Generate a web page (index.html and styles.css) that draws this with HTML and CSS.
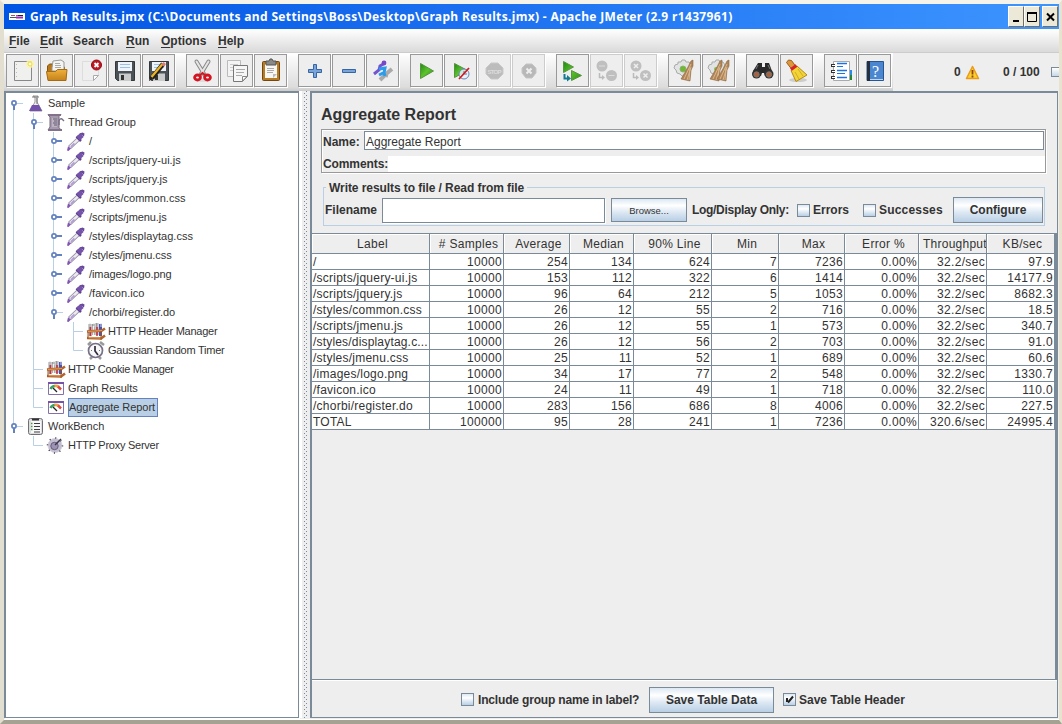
FILE: index.html
```html
<!DOCTYPE html>
<html lang="en">
<head>
<meta charset="utf-8">
<title>Graph Results.jmx - Apache JMeter</title>
<link rel="stylesheet" href="styles.css">
</head>
<body>
<svg class="defs" width="0" height="0" aria-hidden="true">
  <defs>
    <linearGradient id="green" x1="0" y1="0" x2="1" y2="1"><stop offset="0" stop-color="#1c8a12"/><stop offset=".5" stop-color="#5ec42c"/><stop offset="1" stop-color="#2a8a1c"/></linearGradient>
    <linearGradient id="gold" x1="0" y1="0" x2="0" y2="1"><stop offset="0" stop-color="#f0b03c"/><stop offset="1" stop-color="#c4821a"/></linearGradient>
    <symbol id="page" viewBox="0 0 31 31"><path d="M7.500 6.500h17v19h-17z" fill="#f0f0ee" stroke="#888"/><path d="M9.500 9v14" stroke="#bbb" stroke-dasharray="1 3"/></symbol>
    <symbol id="disk" viewBox="0 0 31 31"><path d="M6.500 6.500h19v19h-17l-2-2z" fill="#4a5157" stroke="#33383c"/><path d="M9 7h14v9H9z" fill="#eef4fa"/><path d="M11 9.500h10M11 12.500h10" stroke="#9dbfe4"/><path d="M10 18.500h12V26H10z" fill="#c9cccb"/><path d="M12 20h3v5h-3z" fill="#333"/></symbol>
    <symbol id="drop" viewBox="0 0 20 19"><path d="M3.500 15.500l8.500-8" stroke="#9690a6" stroke-width="4.400"/><path d="M4 15l8-7.500" stroke="#eceaf0" stroke-width="2.400"/><path d="M1 18.500l1-4 3 2-2.500 2.500z" fill="#8254b4"/><path d="M5 15l3.500-3.500" stroke="#b49fd4" stroke-width="2"/><path d="M10.500 4.500l4.500 4.500" stroke="#5d418c" stroke-width="2.500"/><path d="M12 6.500L16 3" stroke="#7553aa" stroke-width="5"/><path d="M13.500 1.500l3-1 2 1-.5 3z" fill="#68489a"/></symbol>
    <symbol id="tubes" viewBox="0 0 20 19"><path d="M4 2v12M7.500 2v11M11 1v12" stroke="#999" stroke-width="3"/><path d="M14.500 2v12" stroke="#4751b4" stroke-width="3"/><path d="M4 1v4M8 1v4M12 1v4M15 1v4" stroke="#ddd"/><path d="M4.500 5v9M11 5v9" stroke="#c33045" stroke-width="1.500"/><path d="M7.500 4v9" stroke="#f2f2f2" stroke-width="1.500"/><path d="M1 9.500l15-1 3-2M1 16l14 .5 4-3" stroke="#b5652c" stroke-width="2.500" fill="none"/><path d="M2 9.500l14-1M2 15.500l13 .5" stroke="#e79a51"/><path d="M2 10v7M15 9v9" stroke="#a0561f"/></symbol>
    <symbol id="gauge" viewBox="0 0 20 19"><path d="M2 3.500h16v12H2z" fill="#fff"/><path d="M2.500 4v11.500h15V4" fill="none" stroke="#8570a9"/><path d="M2 4h16" stroke="#7652a8" stroke-width="2"/><path d="M4.500 10Q6 7 9 7" fill="none" stroke="#3a9f5f" stroke-width="2.500"/><path d="M8.500 7Q11 6.500 13 8" fill="none" stroke="#eda044" stroke-width="2.500"/><path d="M12 7.500l3 3" stroke="#e0473f" stroke-width="2.500"/><path d="M7 9l4 4" stroke="#222" stroke-width="1.300"/></symbol>
    <symbol id="open" viewBox="0 0 20 19"><path d="M11 9.500h6" stroke="#b8cfe5"/><path d="M8 11v5" stroke="#6382bf" stroke-width="2"/><circle cx="8" cy="9" r="2.100" fill="#fff" stroke="#6382bf" stroke-width="1.700"/></symbol>
    <symbol id="shut" viewBox="0 0 20 19"><path d="M10 9h6" stroke="#6382bf" stroke-width="2"/><circle cx="8" cy="9" r="2.100" fill="#fff" stroke="#6382bf" stroke-width="1.700"/></symbol>
    <symbol id="gear" viewBox="0 0 31 31"><path d="M9 7h3l1-2h3l1 2h3l2 3-1 2 1 3-2 3-2 1-2 2h-3l-2-2-3-1-1-3-2-2 1-3 3-1z" fill="#e2e4e3" stroke="#a8abab"/></symbol>
    <symbol id="brush" viewBox="0 0 31 31"><path d="M21 6l2-1 0 6-2 4-1 11-9-2 3-5 4-7z" fill="#b18558" stroke="#8c6540" stroke-width=".6"/><path d="M21 9l-7 15M21 12l-4 13M20 13l-1 12" stroke="#d9b78d"/></symbol>
  </defs>
</svg>

<div class="window">
  <header class="titlebar">
    <svg class="app-icon" width="16" height="16"><path fill="#fff" d="M0 4h16v7H0z"/><path d="M2 6.500h4M7 6.500h2" stroke="#9a5878"/><path d="M9 6.500h5" stroke="#222"/><path d="M1 8.500h6" stroke="#555"/><path d="M7 8.500h7" stroke="#9c2fb4" stroke-width="2"/></svg>
    <h1 class="title">Graph Results.jmx (C:\Documents and Settings\Boss\Desktop\Graph Results.jmx) - Apache JMeter (2.9 r1437961)</h1>
    <div class="winbuttons">
      <svg class="wb" width="15" height="21"><path d="M4 14h6" stroke="#000" stroke-width="2"/></svg>
      <svg class="wb" width="15" height="21"><path d="M2.500 6v8.500h9V6" fill="none" stroke="#000"/><path d="M2 6h10" stroke="#000" stroke-width="2"/></svg>
      <svg class="wb wb-close" width="15" height="21"><path d="M4 6.500l7 7M11 6.500l-7 7" stroke="#000" stroke-width="2"/></svg>
    </div>
  </header>

  <nav class="menubar">
    <span class="m-file"><u>F</u>ile</span><span class="m-edit"><u>E</u>dit</span><span class="m-search">Search</span><span class="m-run"><u>R</u>un</span><span class="m-options"><u>O</u>ptions</span><span class="m-help"><u>H</u>elp</span>
  </nav>

  <div class="toolbar">
    <div class="group">
      <div class="tb"><svg width="31" height="31"><use href="#page"/><circle cx="23" cy="9" r="4" fill="#fff7a0" opacity=".8"/><circle cx="23" cy="9" r="2" fill="#fff" stroke="#efd93b"/></svg></div>
      <div class="tb"><svg width="31" height="31"><path d="M6.500 11l2-2h4l2 3h9v8h-17z" fill="#b87818" stroke="#86560e"/><path d="M11 13l1-7 8-1 3 2v9H11z" fill="#f4f4f2" stroke="#999"/><path d="M14 8.500h5M14 10.500h6M14 12.500h6" stroke="#aaa"/><path d="M5.500 16.500h9l2-2h9.500l-1 11h-18z" fill="url(#gold)" stroke="#a66a10"/></svg></div>
      <div class="tb"><svg width="31" height="31"><path d="M7.500 6.500h16v14l-5 5h-11z" fill="#efefef" stroke="#ddd"/><path d="M18.500 25.500v-5h5z" fill="#fff" stroke="#aaa"/><circle cx="21.500" cy="10" r="5" fill="#c11722" stroke="#8d0c15"/><path d="M19.500 8l4 4M23.500 8l-4 4" stroke="#fff" stroke-width="1.800"/></svg></div>
      <div class="tb"><svg width="31" height="31"><use href="#disk"/></svg></div>
      <div class="tb"><svg width="31" height="31"><use href="#disk"/><path d="M9 23l11-14" stroke="#222" stroke-width="4.500"/><path d="M8.500 22l11-13" stroke="#f1b421" stroke-width="2.200"/><path d="M18.500 9.500l2-2.500 2.500 2-2 2.500z" fill="#dc7b70"/><path d="M6 26l1-5 3 3z" fill="#222"/></svg></div>
    </div>
    <div class="group">
      <div class="tb"><svg width="31" height="31"><ellipse cx="16" cy="25" rx="8" ry="2" fill="#ddd"/><path d="M9.500 6.500l8.500 14M21.500 6.500l-8.500 14" stroke="#888" stroke-width="4" stroke-linecap="round"/><path d="M9.500 6.500l8.500 14M21.500 6.500l-8.500 14" stroke="#e5e5e3" stroke-width="2" stroke-linecap="round"/><ellipse cx="10.500" cy="22.500" rx="2.900" ry="2.500" fill="#eee" stroke="#d31522" stroke-width="2.800"/><ellipse cx="20.500" cy="22.500" rx="2.900" ry="2.500" fill="#eee" stroke="#d31522" stroke-width="2.800"/><path d="M13 20l2.500-2 2.500 2" stroke="#d31522" stroke-width="2" fill="none"/></svg></div>
      <div class="tb"><svg width="31" height="31"><path d="M6.500 5.500h13v16h-13z" fill="#f4f4f4" stroke="#bbb"/><path d="M9 9.500h8M9 12.500h8M9 15.500h4" stroke="#ccc"/><path d="M12.500 10.500h14v11l-5 5h-9z" fill="#f6f6f6" stroke="#777"/><path d="M15 14.500h9M15 17.500h8M15 20.500h6" stroke="#aaa"/><path d="M21.500 26v-4.500H26z" fill="#fff" stroke="#888"/></svg></div>
      <div class="tb"><svg width="31" height="31"><rect x="7.500" y="6.500" width="17" height="19" rx="1" fill="#b77b22" stroke="#714814"/><path d="M10 9h12v14H10z" fill="#f7f7f4"/><path d="M12 13.500h7M12 15.500h7M12 17.500h6" stroke="#aaa"/><path d="M18 23v-4h4z" fill="#bbb"/><path d="M11 6h3l1-2h2l1 2h3v4H11z" fill="#888a85" stroke="#555"/></svg></div>
    </div>
    <div class="group">
      <div class="tb"><svg width="31" height="31"><path d="M14.500 9.500h3v5h5v3h-5v5h-3v-5h-5v-3h5z" fill="#7aa5dc" stroke="#3465a4"/></svg></div>
      <div class="tb"><svg width="31" height="31"><path d="M9.500 14.500h13v3h-13z" fill="#7aa5dc" stroke="#3465a4"/></svg></div>
      <div class="tb"><svg width="31" height="31"><path d="M13 25l6-6 6-5" stroke="#aaa" stroke-width="4" fill="none"/><path d="M16 20l5 1" stroke="#aaa" stroke-width="3"/><path d="M7 19l5-4 1-4 5-3" fill="none" stroke="#7553cf" stroke-width="3"/><circle cx="17" cy="8" r="2.400" fill="#7847c8"/><path d="M12 14l6-1-1 5 1 3M12 20l4-2" fill="none" stroke="#299cec" stroke-width="3"/></svg></div>
    </div>
    <div class="group">
      <div class="tb"><svg width="31" height="31"><path d="M9.500 8.500v15l13-7.500z" fill="url(#green)" stroke="#55933d"/></svg></div>
      <div class="tb"><svg width="31" height="31"><path d="M9.500 8.500v14l13-7z" fill="url(#green)" stroke="#55933d"/><circle cx="19" cy="19" r="5" fill="#e8f0fb" fill-opacity=".85" stroke="#6587b4"/><path d="M19 16v3h3" stroke="#5576ae" fill="none"/><path d="M14 24l10-11" stroke="#d11a1a" stroke-width="1.700"/></svg></div>
      <div class="tb off"><svg width="31" height="31"><path d="M12 8h7l5 5v6l-5 5h-7l-5-5v-6z" fill="#bcbcbc" stroke="#c9c9c9"/><text x="8.500" y="18.500" class="stop-word" textLength="14">STOP</text></svg></div>
      <div class="tb off"><svg width="31" height="31"><path d="M13 9h6l4 4v5l-4 5h-6l-4-5v-5z" fill="#b8b8b8" stroke="#c5c5c5"/><path d="M13.500 13.500l5 5M18.500 13.500l-5 5" stroke="#eee" stroke-width="2"/></svg></div>
    </div>
    <div class="group">
      <div class="tb"><svg width="31" height="31"><path d="M6.500 6.500v11l10-5.500zM14.500 15.500v10l10-5z" fill="url(#green)" stroke="#59943e"/><path d="M7.500 19v4.500h3" fill="none" stroke="#147a91" stroke-width="2"/><path d="M10 20l4 3.500-4 3z" fill="#147a91"/></svg></div>
      <div class="tb off"><svg width="31" height="31"><circle cx="11" cy="11" r="5.500" fill="#bfbfbf"/><circle cx="20.500" cy="20.500" r="5.500" fill="#bfbfbf"/><path d="M8 11h6M17.500 20.500h6" stroke="#ddd"/><path d="M8.500 18v4.500h3" fill="none" stroke="#bbb" stroke-width="1.500"/><path d="M11 20l3 2.500-3 2.500z" fill="#bbb"/></svg></div>
      <div class="tb off"><svg width="31" height="31"><circle cx="11" cy="11" r="5.500" fill="#bfbfbf"/><circle cx="20.500" cy="20.500" r="5.500" fill="#bfbfbf"/><path d="M9 9l4 4M13 9l-4 4M18.500 18.500l4 4M22.500 18.500l-4 4" stroke="#eee" stroke-width="1.500"/><path d="M8.500 18v4.500h3" fill="none" stroke="#bbb" stroke-width="1.500"/><path d="M11 20l3 2.500-3 2.500z" fill="#bbb"/></svg></div>
    </div>
    <div class="group wide">
      <div class="tb"><svg width="31" height="31"><use href="#gear"/><circle cx="14" cy="14" r="3" fill="#6cbb2a" stroke="#91ad7a"/><use href="#brush" x="1"/></svg></div>
      <div class="tb"><svg width="31" height="31"><use href="#gear"/><circle cx="13" cy="14" r="2" fill="#8abd52"/><use href="#brush" x="-4"/><use href="#brush" x="3"/></svg></div>
    </div>
    <div class="group wide">
      <div class="tb"><svg width="31" height="31"><path d="M11 8h4v4h3V8h4l3 8v5h-7l-1-3h-2l-1 3H6v-5z" fill="#292929"/><circle cx="9.500" cy="19" r="4.500" fill="#30302f"/><circle cx="22" cy="19" r="4.500" fill="#30302f"/><circle cx="9.500" cy="19.500" r="2.700" fill="#ab623b" stroke="#777"/><circle cx="22" cy="19.500" r="2.700" fill="#ab623b" stroke="#777"/><path d="M11 10l-2 4M21 10l2 4" stroke="#777"/></svg></div>
      <div class="tb"><svg width="31" height="31"><ellipse cx="17" cy="25" rx="9" ry="2" fill="#ccc"/><path d="M5.500 7.500l2-2.500 3 .5 4 5.500-4 3z" fill="#dc963c" stroke="#9c5f16"/><path d="M10 15.500l6-4.500 10 9-11 6.500z" fill="#f2d437" stroke="#b58a13"/><path d="M10 14.500l5.500-4" stroke="#d6222b" stroke-width="3"/><path d="M14 17l4 7M17 14l5 7" stroke="#cfae27"/></svg></div>
    </div>
    <div class="group wide">
      <div class="tb"><svg width="31" height="31"><path d="M24 15h3v5h-3z" fill="#2788ed"/><path d="M24 20h3v5h-3z" fill="#21862c"/><path d="M8.500 6.500h16v19h-16z" fill="#fff" stroke="#aaa"/><path d="M12 8.500h10M12 15.500h10M12 22.500h10" stroke="#1c73e3" stroke-width="1.500"/><path d="M12 11.500h6M12 18.500h8" stroke="#1c73e3"/><path d="M6 10.500h4M6 16.500h4M6 22.500h4" stroke="#333" stroke-width="3"/><path d="M7 10.500h3M7 16.500h3M7 22.500h3" stroke="#fff"/></svg></div>
      <div class="tb"><svg width="31" height="31"><path d="M8 6.500h16.500v19H8z" fill="#4b87d0" stroke="#27578e"/><path d="M8 6h3v20H8z" fill="#252f3e"/><path d="M11 24.500h13" stroke="#bcd7f6"/><text x="13" y="21.500" class="help-mark">?</text></svg></div>
    </div>
    <div class="status">
      <span class="errs">0</span>
      <svg width="15" height="15"><path d="M7.500 1.500l6 12h-12z" fill="#fcd02e" stroke="#e99c18" stroke-width="1.500" stroke-linejoin="round"/><path d="M7.500 5v4.500M7.500 10.500v2" stroke="#92410a" stroke-width="1.800"/></svg>
      <span class="threads">0 / 100</span>
      <i class="lamp"></i>
    </div>
  </div>

  <div class="body">
    <div class="tree">
      <div class="row"><svg class="c"><path class="ln" d="M7.500 10v9"/><use href="#open"/></svg><svg class="c"><path d="M7 2l2 1v5l-5 9h12l-5-9V3l1-1z" fill="#eee" stroke="#999"/><path d="M6 11h7l3 6H3z" fill="#7350ab"/><path d="M6 3h7M11 4v6" stroke="#777"/></svg><span>Sample</span></div>
      <div class="row"><svg class="c"><path class="ln" d="M7.500 0v19"/></svg><svg class="c"><path class="ln" d="M7.500 0v19"/><use href="#open"/></svg><svg class="c"><path d="M2 1.500h13l-2 2v11l2 2.500H2l2-3V4z" fill="#a69bae" stroke="#76697f"/><path d="M2 2h13M2 17h14" stroke="#81718b" stroke-width="2"/><path d="M6 5h5v9H6z" fill="#bdb4c3"/><path d="M7 6h4M8 8h3M7 10h4M8 12h3" stroke="#655a70"/><path d="M13 12V8q1-3 3-2l2 2" fill="none" stroke="#796d82" stroke-width="1.400"/></svg><span>Thread Group</span></div>
      <div class="row"><svg class="c"><path class="ln" d="M7.500 0v19"/></svg><svg class="c"><path class="ln" d="M7.500 0v19"/></svg><svg class="c"><path class="ln" d="M7.500 0v19"/><use href="#shut"/></svg><svg class="c"><use href="#drop"/></svg><span class="s">/</span></div>
      <div class="row"><svg class="c"><path class="ln" d="M7.500 0v19"/></svg><svg class="c"><path class="ln" d="M7.500 0v19"/></svg><svg class="c"><path class="ln" d="M7.500 0v19"/><use href="#shut"/></svg><svg class="c"><use href="#drop"/></svg><span class="s">/scripts/jquery-ui.js</span></div>
      <div class="row"><svg class="c"><path class="ln" d="M7.500 0v19"/></svg><svg class="c"><path class="ln" d="M7.500 0v19"/></svg><svg class="c"><path class="ln" d="M7.500 0v19"/><use href="#shut"/></svg><svg class="c"><use href="#drop"/></svg><span class="s">/scripts/jquery.js</span></div>
      <div class="row"><svg class="c"><path class="ln" d="M7.500 0v19"/></svg><svg class="c"><path class="ln" d="M7.500 0v19"/></svg><svg class="c"><path class="ln" d="M7.500 0v19"/><use href="#shut"/></svg><svg class="c"><use href="#drop"/></svg><span class="s">/styles/common.css</span></div>
      <div class="row"><svg class="c"><path class="ln" d="M7.500 0v19"/></svg><svg class="c"><path class="ln" d="M7.500 0v19"/></svg><svg class="c"><path class="ln" d="M7.500 0v19"/><use href="#shut"/></svg><svg class="c"><use href="#drop"/></svg><span class="s narrow">/scripts/jmenu.js</span></div>
      <div class="row"><svg class="c"><path class="ln" d="M7.500 0v19"/></svg><svg class="c"><path class="ln" d="M7.500 0v19"/></svg><svg class="c"><path class="ln" d="M7.500 0v19"/><use href="#shut"/></svg><svg class="c"><use href="#drop"/></svg><span class="s">/styles/displaytag.css</span></div>
      <div class="row"><svg class="c"><path class="ln" d="M7.500 0v19"/></svg><svg class="c"><path class="ln" d="M7.500 0v19"/></svg><svg class="c"><path class="ln" d="M7.500 0v19"/><use href="#shut"/></svg><svg class="c"><use href="#drop"/></svg><span class="s narrow">/styles/jmenu.css</span></div>
      <div class="row"><svg class="c"><path class="ln" d="M7.500 0v19"/></svg><svg class="c"><path class="ln" d="M7.500 0v19"/></svg><svg class="c"><path class="ln" d="M7.500 0v19"/><use href="#shut"/></svg><svg class="c"><use href="#drop"/></svg><span class="s narrow">/images/logo.png</span></div>
      <div class="row"><svg class="c"><path class="ln" d="M7.500 0v19"/></svg><svg class="c"><path class="ln" d="M7.500 0v19"/></svg><svg class="c"><path class="ln" d="M7.500 0v19"/><use href="#shut"/></svg><svg class="c"><use href="#drop"/></svg><span class="s">/favicon.ico</span></div>
      <div class="row"><svg class="c"><path class="ln" d="M7.500 0v19"/></svg><svg class="c"><path class="ln" d="M7.500 0v19"/></svg><svg class="c"><path class="ln" d="M7.500 0v9"/><use href="#open"/></svg><svg class="c"><use href="#drop"/></svg><span class="s narrow">/chorbi/register.do</span></div>
      <div class="row"><svg class="c"><path class="ln" d="M7.500 0v19"/></svg><svg class="c"><path class="ln" d="M7.500 0v19"/></svg><svg class="c"></svg><svg class="c"><path class="ln" d="M7.500 0v19M7 9.500h10"/></svg><svg class="c"><use href="#tubes"/></svg><span class="tight">HTTP Header Manager</span></div>
      <div class="row"><svg class="c"><path class="ln" d="M7.500 0v19"/></svg><svg class="c"><path class="ln" d="M7.500 0v19"/></svg><svg class="c"></svg><svg class="c"><path class="ln" d="M7.500 0v9.500h9.500"/></svg><svg class="c"><path d="M2 4l3-3M14 1l4 3M4 18l2-2M15 18l-2-2" stroke="#999" stroke-width="2.500"/><circle cx="9.500" cy="9.500" r="7" fill="#f8f8f8" stroke="#777187" stroke-width="1.700"/><path d="M9 5v5l3 4" fill="none" stroke="#302c3c" stroke-width="1.700"/><path d="M5 9.500h1M13 9.500h1" stroke="#777"/></svg><span class="tight">Gaussian Random Timer</span></div>
      <div class="row"><svg class="c"><path class="ln" d="M7.500 0v19"/></svg><svg class="c"><path class="ln" d="M7.500 0v19M7 9.500h10"/></svg><svg class="c"><use href="#tubes"/></svg><span class="tightest">HTTP Cookie Manager</span></div>
      <div class="row"><svg class="c"><path class="ln" d="M7.500 0v19"/></svg><svg class="c"><path class="ln" d="M7.500 0v19M7 9.500h10"/></svg><svg class="c"><use href="#gauge"/></svg><span>Graph Results</span></div>
      <div class="row"><svg class="c"><path class="ln" d="M7.500 0v19"/></svg><svg class="c"><path class="ln" d="M7.500 0v9.500h9.500"/></svg><svg class="c"><use href="#gauge"/></svg><span class="selected">Aggregate Report</span></div>
      <div class="row"><svg class="c"><path class="ln" d="M7.500 0v9"/><use href="#open"/></svg><svg class="c"><rect x="2.500" y="1.500" width="14" height="16" rx="2" fill="#ddd" stroke="#706d78"/><path d="M5 4h10v12H5z" fill="#f8f8f8"/><path d="M6 2.500h7" stroke="#333" stroke-width="2"/><path d="M8 6.500h6M8 9.500h6M8 12.500h6M8 15h6" stroke="#3d3d42"/><path d="M5 6.500h1.500M5 9.500h1.500M5 12.500h1.500" stroke="#4a9546" stroke-width="1.500"/></svg><span>WorkBench</span></div>
      <div class="row"><svg class="c"></svg><svg class="c"><path class="ln" d="M7.500 0v9.500h9.500"/></svg><svg class="c"><circle cx="9" cy="9.500" r="7" fill="#c3bdd0" stroke="#d7d2e0"/><circle cx="9" cy="9.500" r="7.500" fill="none" stroke="#332e3c" stroke-dasharray="1 4.900" stroke-width="1.500"/><circle cx="8.500" cy="10" r="3.700" fill="#9c92b4" stroke="#675c78"/><path d="M9 9l6-6" stroke="#3d354b" stroke-width="1.500"/></svg><span class="tight">HTTP Proxy Server</span></div>
    </div>
    <div class="splitter"></div>

    <main class="panel">
      <h2>Aggregate Report</h2>
      <div class="namebox">
        <div class="line name"><label>Name:</label><div class="field">Aggregate Report</div></div>
        <div class="line comments"><label>Comments:</label><div class="blank"></div></div>
      </div>
      <div class="filebox">
        <span class="legend">Write results to file / Read from file</span>
        <label class="fn">Filename</label><div class="fileinput"></div><div class="btn browse">Browse...</div>
        <span class="log">Log/Display Only:</span>
        <i class="cb"></i><span class="err">Errors</span>
        <i class="cb"></i><span class="suc">Successes</span>
        <div class="btn configure">Configure</div>
      </div>
      <div class="scroll">
        <table>
          <colgroup><col class="w118"><col class="w74"><col class="w66"><col class="w64"><col class="w78"><col class="w67"><col class="w66"><col class="w74"><col class="w68"><col class="w68"></colgroup>
          <thead><tr><th>Label</th><th># Samples</th><th>Average</th><th>Median</th><th>90% Line</th><th>Min</th><th>Max</th><th>Error %</th><th class="thr">Throughput</th><th>KB/sec</th></tr></thead>
          <tbody>
            <tr><td>/</td><td>10000</td><td>254</td><td>134</td><td>624</td><td>7</td><td>7236</td><td>0.00%</td><td>32.2/sec</td><td>97.9</td></tr>
            <tr><td>/scripts/jquery-ui.js</td><td>10000</td><td>153</td><td>112</td><td>322</td><td>6</td><td>1414</td><td>0.00%</td><td>32.2/sec</td><td>14177.9</td></tr>
            <tr><td>/scripts/jquery.js</td><td>10000</td><td>96</td><td>64</td><td>212</td><td>5</td><td>1053</td><td>0.00%</td><td>32.2/sec</td><td>8682.3</td></tr>
            <tr><td>/styles/common.css</td><td>10000</td><td>26</td><td>12</td><td>55</td><td>2</td><td>716</td><td>0.00%</td><td>32.2/sec</td><td>18.5</td></tr>
            <tr><td>/scripts/jmenu.js</td><td>10000</td><td>26</td><td>12</td><td>55</td><td>1</td><td>573</td><td>0.00%</td><td>32.2/sec</td><td>340.7</td></tr>
            <tr><td class="full">/styles/displaytag.c...</td><td>10000</td><td>26</td><td>12</td><td>56</td><td>2</td><td>703</td><td>0.00%</td><td>32.2/sec</td><td>91.0</td></tr>
            <tr><td>/styles/jmenu.css</td><td>10000</td><td>25</td><td>11</td><td>52</td><td>1</td><td>689</td><td>0.00%</td><td>32.2/sec</td><td>60.6</td></tr>
            <tr><td>/images/logo.png</td><td>10000</td><td>34</td><td>17</td><td>77</td><td>2</td><td>548</td><td>0.00%</td><td>32.2/sec</td><td>1330.7</td></tr>
            <tr><td>/favicon.ico</td><td>10000</td><td>24</td><td>11</td><td>49</td><td>1</td><td>718</td><td>0.00%</td><td>32.2/sec</td><td>110.0</td></tr>
            <tr><td>/chorbi/register.do</td><td>10000</td><td>283</td><td>156</td><td>686</td><td>8</td><td>4006</td><td>0.00%</td><td>32.2/sec</td><td>227.5</td></tr>
            <tr><td>TOTAL</td><td>100000</td><td>95</td><td>28</td><td>241</td><td>1</td><td>7236</td><td>0.00%</td><td>320.6/sec</td><td>24995.4</td></tr>
          </tbody>
        </table>
      </div>
      <footer class="actions">
        <i class="cb"></i><span class="inc">Include group name in label?</span>
        <div class="btn save">Save Table Data</div>
        <i class="cb"><svg width="11" height="11"><path d="M3 4v4M4 8.500L9 2.500" stroke="#222" stroke-width="2" fill="none"/></svg></i><span class="hdr">Save Table Header</span>
      </footer>
    </main>
  </div>
</div>
</body>
</html>
```
FILE: styles.css
```css
* { box-sizing: border-box; }
body { margin: 0; width: 1062px; height: 724px; overflow: hidden; background: #ece9d8; font: 12px "Liberation Sans", Arial, sans-serif; color: #333; }
svg { display: block; flex: none; }
.defs { position: absolute; }
.window { width: 1062px; height: 724px; display: flex; flex-direction: column; border: solid; border-width: 4px 3px 4px 4px; border-color: #f5f3ea #e7e3cf #a5a294 #e2dfd0; background: #eee; box-shadow: inset 0 -1px #fff; }
.titlebar { flex: none; height: 25px; display: flex; align-items: center; background: linear-gradient(90deg, #0054e3, #1c70f0 45%, #3d95ff); color: #fff; padding: 0 1px 0 5px; }
.app-icon { margin-right: 5px; }
.title { margin: 0; white-space: nowrap; font: bold 12px/25px "Noto Sans", sans-serif; letter-spacing: .345px; flex: 1; }
.winbuttons { display: flex; }
.wb { background: #ece9d8; border: solid 1px; border-color: #fff #716f64 #716f64 #fff; width: 16px; }
.wb-close { margin-left: 2px; }
.menubar { flex: none; height: 24px; display: flex; background: linear-gradient(#fff, #dadada); border-bottom: 1px solid #ccc; font-weight: bold; line-height: 24px; padding-left: 5px; }
.menubar u { text-underline-offset: 2px; }
.menubar span { white-space: nowrap; }
.m-file { width: 31px; }
.m-edit { width: 33px; }
.m-search { width: 53px; letter-spacing: .15px; }
.m-run { width: 35px; }
.m-options { width: 57px; }
.toolbar { flex: none; height: 38px; display: flex; padding: 1px 0 0 2px; background: linear-gradient(#fff, #dcdcdc 34px, #ccc); }
.group { display: flex; gap: 1px; margin-right: 11px; }
.tb { width: 33px; height: 33px; border: 1px solid #999; background: #eee; box-shadow: 1px 1px #fff; }
.off { border-color: #ccc; }
.stop-word { font: bold 6px "Liberation Sans", sans-serif; fill: #ddd; }
.help-mark { font: 16px "Liberation Serif", serif; fill: #fff; }
.status { flex: 1; display: flex; align-items: center; background: #eee; margin: -1px 0 0 -9px; font-weight: bold; overflow: hidden; }
.errs { margin-left: 61px; width: 11px; flex: none; }
.threads { margin-left: 23px; width: 48px; flex: none; white-space: nowrap; }
.lamp { width: 14px; height: 10px; flex: none; border: 1px solid #7a8a99; background: linear-gradient(#fff, #c5d8e8); }
.body { flex: 1; min-height: 0; display: flex; align-items: flex-start; }
.tree { width: 295px; height: 627px; background: #fff; border: solid #7a8a99; border-width: 2px 1px 1px 2px; padding-top: 1px; box-shadow: 1px 1px #fff; font-size: 11px; }
.row { height: 19px; display: flex; align-items: center; white-space: nowrap; letter-spacing: -.05px; }
.row span { margin-left: 2px; line-height: 17px; }
.row .s { margin-left: 3px; letter-spacing: .03px; }
.row .narrow { letter-spacing: -.07px; }
.row .tight { letter-spacing: -.25px; }
.row .tightest { letter-spacing: -.35px; }
.row .selected { background: #b8cfe5; border: 1px solid #6382bf; padding: 0 2px 0 0; margin-left: 2px; }
.c { width: 20px; height: 19px; }
.ln { fill: none; stroke: #b8cfe5; }
.splitter { width: 11px; height: 627px; background: linear-gradient(#7a8a99 1px, transparent 1px) 5px 2px / 1px 4px repeat-y, linear-gradient(#7a8a99 1px, transparent 1px) 7px 4px / 1px 4px repeat-y, linear-gradient(90deg, #fff 3px, #eee 3px); }
.panel { width: 748px; height: 627px; border: solid #7a8a99; border-width: 2px 1px 1px 2px; display: flex; flex-direction: column; }
h2 { font: bold 16px/20px "Liberation Sans", sans-serif; margin: 12px 0 4px 9px; height: 20px; white-space: nowrap; }
.namebox { margin-left: 9px; width: 725px; height: 44px; border: 1px solid #999; box-shadow: 1px 1px #fff, inset 1px 1px #fff; font-weight: bold; }
.line { display: flex; white-space: nowrap; padding-left: 1px; }
.name { height: 23px; padding-top: 1px; line-height: 22px; }
.name label { width: 41px; }
.field { width: 680px; height: 19px; background: #fff; border: 1px solid #7a8a99; line-height: 20px; padding-left: 1px; font-weight: normal; }
.comments { height: 19px; line-height: 22px; }
.comments label { width: 65px; letter-spacing: -.1px; }
.blank { flex: 1; background: #fff; margin-top: 3px; height: 16px; }
.filebox { position: relative; margin: 14px 0 0 11px; width: 722px; height: 39px; border: 1px solid #b8cfe5; display: flex; align-items: center; font-weight: bold; white-space: nowrap; padding: 7px 0 0 1px; }
.legend { position: absolute; left: 2px; top: -8px; line-height: 16px; background: #eee; padding: 0 3px; letter-spacing: -.07px; }
.fn { width: 57px; }
.fileinput { width: 223px; height: 25px; background: #fff; border: 1px solid #7a8a99; box-shadow: 1px 1px #fff; }
.btn { border: 1px solid #7a8a99; background: linear-gradient(#dde8f3, #fff 30%, #dde8f3 60%, #b8cfe5); display: flex; align-items: center; justify-content: center; font-weight: bold; white-space: nowrap; }
.browse { width: 76px; height: 24px; margin: 0 5px 0 6px; font-weight: normal; font-size: 9.500px; }
.log { width: 105px; letter-spacing: -.3px; }
.cb { width: 13px; height: 13px; flex: none; border: 1px solid #7a8a99; background: linear-gradient(#dde8f3, #fff 35%, #b8cfe5); }
.err { width: 50px; margin-left: 3px; }
.suc { width: 71px; margin-left: 3px; letter-spacing: .2px; }
.configure { width: 90px; height: 26px; margin-left: 3px; }
.scroll { height: 447px; width: 745px; margin-top: auto; border-top: 1px solid #7a8a99; border-right: 2px solid #7a8a99; border-bottom: 1px solid #7a8a99; box-shadow: 0 1px #fff; }
table { table-layout: fixed; width: 743px; border-spacing: 0; }
th, td { padding: 0; overflow: hidden; white-space: nowrap; border: solid #7a8a99; border-width: 0 1px 1px 0; }
th { height: 20px; line-height: 17px; padding: 2px 0 0 4px; font-weight: normal; letter-spacing: .3px; box-shadow: inset 1px 1px #fff; }
.thr { text-align: left; letter-spacing: .25px; }
td { height: 16px; line-height: 13px; padding: 2px 1px 0 0; background: #fff; text-align: right; letter-spacing: .33px; }
td:first-child { text-align: left; padding: 2px 0 0 1px; letter-spacing: .24px; }
td.full:first-child { letter-spacing: .18px; }
.w118 { width: 118px; } .w74 { width: 74px; } .w66 { width: 66px; } .w64 { width: 64px; } .w78 { width: 78px; } .w67 { width: 67px; } .w68 { width: 68px; }
.actions { flex: none; height: 37px; display: flex; align-items: center; padding: 2px 0 0 149px; font-weight: bold; white-space: nowrap; }
.inc { width: 172px; padding-left: 4px; letter-spacing: -.17px; }
.save { width: 125px; height: 26px; margin: 0 9px 0 3px; }
.hdr { padding-left: 3px; }
```
